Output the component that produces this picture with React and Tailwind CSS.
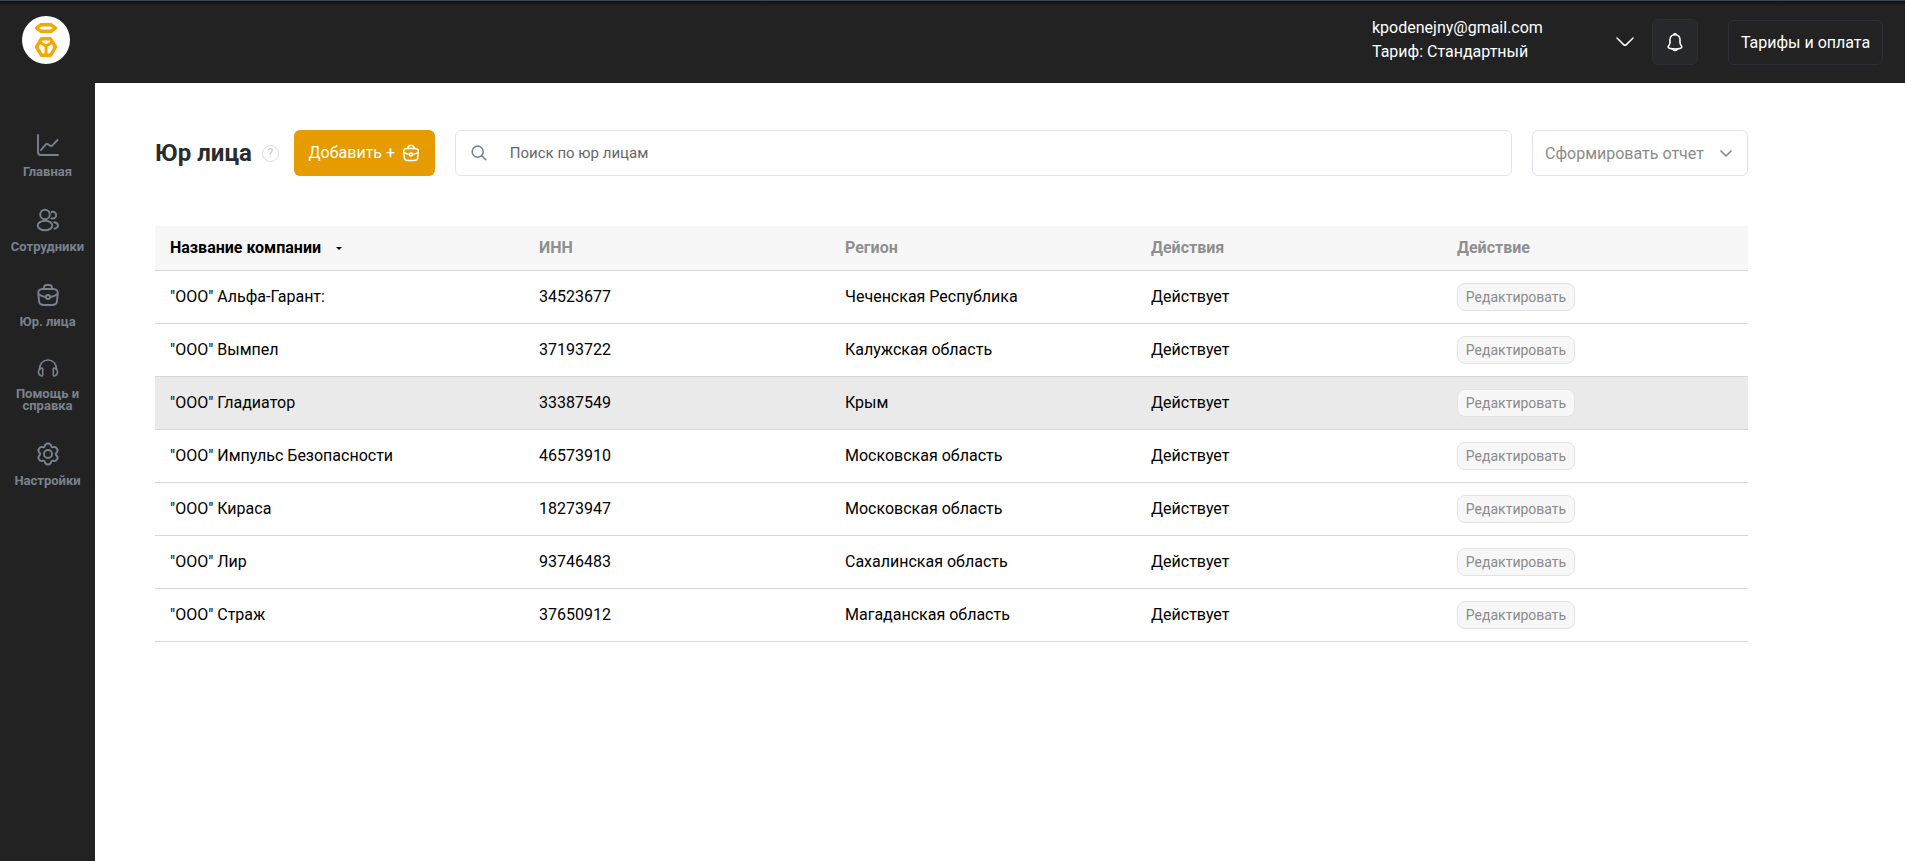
import React, { useState } from 'react';

const companies = [
  { name: '"ООО" Альфа-Гарант:', inn: '34523677', region: 'Чеченская Республика', status: 'Действует' },
  { name: '"ООО" Вымпел', inn: '37193722', region: 'Калужская область', status: 'Действует' },
  { name: '"ООО" Гладиатор', inn: '33387549', region: 'Крым', status: 'Действует' },
  { name: '"ООО" Импульс Безопасности', inn: '46573910', region: 'Московская область', status: 'Действует' },
  { name: '"ООО" Кираса', inn: '18273947', region: 'Московская область', status: 'Действует' },
  { name: '"ООО" Лир', inn: '93746483', region: 'Сахалинская область', status: 'Действует' },
  { name: '"ООО" Страж', inn: '37650912', region: 'Магаданская область', status: 'Действует' },
];

const Icon = ({ className, children, strokeWidth = 1.9, viewBox = '0 0 24 24' }) => (
  <svg
    className={className}
    viewBox={viewBox}
    fill="none"
    stroke="currentColor"
    strokeWidth={strokeWidth}
    strokeLinecap="round"
    strokeLinejoin="round"
    aria-hidden="true"
  >
    {children}
  </svg>
);

const ChartIcon = ({ className }) => (
  <Icon className={className}>
    <path d="M2 2v17a3 3 0 0 0 3 3h17" />
    <path d="M5 17l4.6-5.4c.7-.9 2.1-1 2.9-.1l1 .9c.8.8 2.1.8 2.9-.1L21.500 7" />
  </Icon>
);

const UsersIcon = ({ className }) => (
  <Icon className={className}>
    <circle cx="9" cy="6.500" r="4.800" />
    <ellipse cx="9" cy="17.500" rx="7.300" ry="4.800" />
    <path d="M15.500 4a3.400 3.400 0 1 1 0 6.300" />
    <path d="M18.200 14.300c2.400.5 3.800 1.700 3.800 3.200s-1.400 2.700-3.500 3.200" />
  </Icon>
);

const BriefcaseIcon = ({ className }) => (
  <Icon className={className}>
    <path d="M8 22h8c4.020 0 4.740-1.610 4.950-3.570l.75-8C21.970 7.990 21.270 6 17 6H7c-4.270 0-4.970 1.990-4.700 4.430l.75 8C3.260 20.390 3.980 22 8 22Z" />
    <path d="M8 6v-.8C8 3.430 8 2 11.200 2h1.600C16 2 16 3.430 16 5.200V6" />
    <circle cx="12" cy="14" r="2" />
    <path d="M21.650 11a16.500 16.500 0 0 1-7.650 3M2.620 11.270A16.200 16.200 0 0 0 10 14" />
  </Icon>
);

const HeadphonesIcon = ({ className }) => (
  <Icon className={className} viewBox="0 0 24 20" strokeWidth={1.6}>
    <path d="M3.500 11v-1a8.500 8.500 0 0 1 17 0v1" />
    <path d="M6.700 10.800v5.400c0 1.100-.6 1.500-1.700 1-1.400-.7-2.600-1.900-2.600-3.700s1.200-3 2.600-3.700c1.100-.5 1.700-.1 1.700 1Z" />
    <path d="M17.300 10.800v5.400c0 1.100.6 1.500 1.700 1 1.400-.7 2.600-1.900 2.600-3.700s-1.200-3-2.600-3.700c-1.100-.5-1.700-.1-1.700 1Z" />
  </Icon>
);

const SettingsIcon = ({ className }) => (
  <Icon className={className}>
    <circle cx="12" cy="12" r="4" />
    <path d="M8.700 4.300C9 2.500 10.300 1.500 12 1.500s3 1 3.300 2.800c.2.700.9 1.100 1.600.9 1.700-.6 3.300 0 4.200 1.500.8 1.500.5 3.100-.9 4.300-.6.500-.6 1.400 0 1.900 1.400 1.200 1.700 2.900.9 4.300-.9 1.500-2.500 2.100-4.200 1.500-.7-.2-1.400.2-1.600.9-.3 1.800-1.600 2.900-3.300 2.900s-3-1.100-3.300-2.900c-.2-.7-.9-1.100-1.600-.9-1.700.6-3.300 0-4.200-1.500-.8-1.400-.5-3.100.9-4.300.6-.5.6-1.400 0-1.900-1.400-1.200-1.700-2.800-.9-4.300.9-1.500 2.500-2.100 4.200-1.500.7.2 1.400-.2 1.600-.9Z" />
  </Icon>
);

const BellIcon = ({ className }) => (
  <Icon className={className}>
    <path d="M12 3.200c-3.600 0-6 2.700-6 6.200v3.200c0 .7-.3 1.600-.6 2.200l-1.200 2c-.7 1.200-.2 2.200 1 2.600 4.400 1.300 9.200 1.300 13.600 0 1.200-.4 1.700-1.500 1-2.600l-1.200-2c-.3-.6-.6-1.500-.6-2.200V9.400c0-3.500-2.400-6.200-6-6.200Z" />
    <path d="M10.300 3c.5-1.200 2.900-1.200 3.400 0" />
    <path d="M9.500 20.800c.7 1.700 4.300 1.700 5 0" />
  </Icon>
);

const SearchIcon = ({ className }) => (
  <Icon className={className} strokeWidth={2.3}>
    <circle cx="10" cy="10" r="8.300" />
    <path d="M16.200 16.200L22 22" />
  </Icon>
);

const Logo = () => (
  <svg className="size-12" viewBox="0 0 48 48" role="img" aria-label="Логотип">
    <circle cx="24" cy="24" r="24" fill="#fff" />
    <g fill="none" stroke="#f5a800" strokeLinejoin="round">
      <path d="M14.500 12l4.500-3.300h10l4.500 3.300-4.500 3.300H19Z" strokeWidth="3.400" />
      <path d="M19.500 22.700h9l5 8.300-5 8.300h-9l-5-8.300Z" strokeWidth="3.400" />
      <path d="M18 26.500l6 3.500 6-3.500M24 30v8" strokeWidth="3" />
    </g>
  </svg>
);

const menu = [
  { label: 'Главная', icon: ChartIcon, size: 'size-6' },
  { label: 'Сотрудники', icon: UsersIcon, size: 'size-6' },
  { label: 'Юр. лица', icon: BriefcaseIcon, size: 'size-6' },
  { label: 'Помощь и справка', icon: HeadphonesIcon, size: 'h-[21px] w-6' },
  { label: 'Настройки', icon: SettingsIcon, size: 'size-6' },
];

const Header = () => (
  <header className="flex h-[83px] items-center border-t border-[#3b4553] bg-linear-to-b from-[#111111] to-[#222222] to-[5px] px-[22px] text-white">
    <a href="#" className="mb-1"><Logo /></a>
    <button type="button" className="ml-auto flex w-[262px] items-center justify-between text-left leading-6">
      <span className="pb-1">
        kpodenejny@gmail.com
        <br />
        Тариф: Стандартный
      </span>
      <Icon className="h-[10px] w-[18px]" viewBox="0 0 18 10" strokeWidth={1.5}>
        <path d="M1 1l6.600 6.600a2 2 0 0 0 2.800 0L17 1" />
      </Icon>
    </button>
    <button
      type="button"
      aria-label="Уведомления"
      className="ml-[18px] flex size-[46px] items-center justify-center rounded-md border border-[#2c2f33] bg-[#26282b]"
    >
      <BellIcon className="size-5" />
    </button>
    <a href="#" className="ml-[30px] flex h-[45px] w-[155px] items-center justify-center rounded-md border border-[#2c3036] pt-px">
      Тарифы и оплата
    </a>
  </header>
);

const Sidebar = () => (
  <nav className="flex w-[95px] shrink-0 flex-col items-center gap-[30px] bg-[#222222] pt-[50px]">
    {menu.map(({ label, icon: MenuIcon, size }) => (
      <a
        key={label}
        href="#"
        className="flex w-[76px] flex-col items-center gap-[9px] text-center text-[13px] leading-3 font-bold text-[#7a828e]"
      >
        <MenuIcon className={size} />
        {label}
      </a>
    ))}
  </nav>
);

const Toolbar = () => {
  const [query, setQuery] = useState('');

  return (
    <div className="flex h-[46px] items-center">
      <h1 className="text-2xl font-bold text-[#2b2b2b]">Юр лица</h1>
      <button
        type="button"
        aria-label="Подсказка"
        className="ml-[10px] flex size-[17px] items-center justify-center rounded-full border border-[#dcdcdc] text-xs leading-none text-[#c8c8c8]"
      >
        ?
      </button>
      <button
        type="button"
        className="ml-[15px] flex h-full w-[141px] items-center justify-center gap-[7px] rounded-md bg-[#e69b00] text-white"
      >
        Добавить +
        <BriefcaseIcon className="size-[18px]" />
      </button>
      <label className="ml-5 flex h-full flex-1 items-center rounded-md border border-[#e3e4ea] pl-[15px]">
        <SearchIcon className="size-4 text-[#7a828e]" />
        <input
          type="text"
          aria-label="Поиск по юр лицам"
          placeholder="Поиск по юр лицам"
          value={query}
          onChange={(e) => setQuery(e.target.value)}
          className="ml-[23px] flex-1 text-[15px] outline-none placeholder:text-[#666666]"
        />
      </label>
      <div className="relative ml-5 h-full w-[216px]">
        <select
          aria-label="Сформировать отчет"
          className="h-full w-full appearance-none rounded-md border border-[#e3e4ea] bg-white pt-px pl-3 text-[#8b8b8b]"
        >
          <option>Сформировать отчет</option>
        </select>
        <Icon className="pointer-events-none absolute top-5 right-4 h-[7px] w-3 text-[#8b8b8b]" viewBox="0 0 12 7" strokeWidth={1.7}>
          <path d="M1 1l5 5 5-5" />
        </Icon>
      </div>
    </div>
  );
};

const CompanyTable = () => (
  <table className="mt-[50px] w-full table-fixed text-left">
    <thead>
      <tr className="h-11 border-b border-[#d6d6d6] bg-[#f7f7f7] text-[#8f8f8f]">
        <th className="w-[369px] px-[15px] font-bold text-black">
          <button type="button" className="flex items-center gap-[15px]">
            Название компании
            <svg className="mt-px h-[3px] w-1.5" viewBox="0 0 6 3" aria-hidden="true">
              <path d="M0 0h6L3 3Z" fill="currentColor" />
            </svg>
          </button>
        </th>
        <th className="px-[15px] font-bold">ИНН</th>
        <th className="px-[15px] font-bold">Регион</th>
        <th className="px-[15px] font-bold">Действия</th>
        <th className="px-[15px] font-bold">Действие</th>
      </tr>
    </thead>
    <tbody>
      {companies.map((company) => (
        <tr
          key={company.inn}
          className={`h-[53px] border-b border-[#d6d6d6] ${company.inn === '33387549' ? 'bg-[#eaeaea]' : ''}`}
        >
          <td className="px-[15px]">{company.name}</td>
          <td className="px-[15px]">{company.inn}</td>
          <td className="px-[15px]">{company.region}</td>
          <td className="px-[15px]">{company.status}</td>
          <td className="px-[15px]">
            <button
              type="button"
              className="flex h-7 w-[118px] items-center justify-center rounded-lg border border-[#e3e3e3] bg-[#f7f7f7] text-sm text-[#8b8b8b]"
            >
              Редактировать
            </button>
          </td>
        </tr>
      ))}
    </tbody>
  </table>
);

const App = () => (
  <div className="flex min-h-screen flex-col bg-white font-[Roboto,sans-serif] text-base text-black">
    <Header />
    <div className="flex flex-1">
      <Sidebar />
      <main className="flex-1 pt-[47px] pr-[157px] pl-[60px]">
        <Toolbar />
        <CompanyTable />
      </main>
    </div>
  </div>
);

export default App;
